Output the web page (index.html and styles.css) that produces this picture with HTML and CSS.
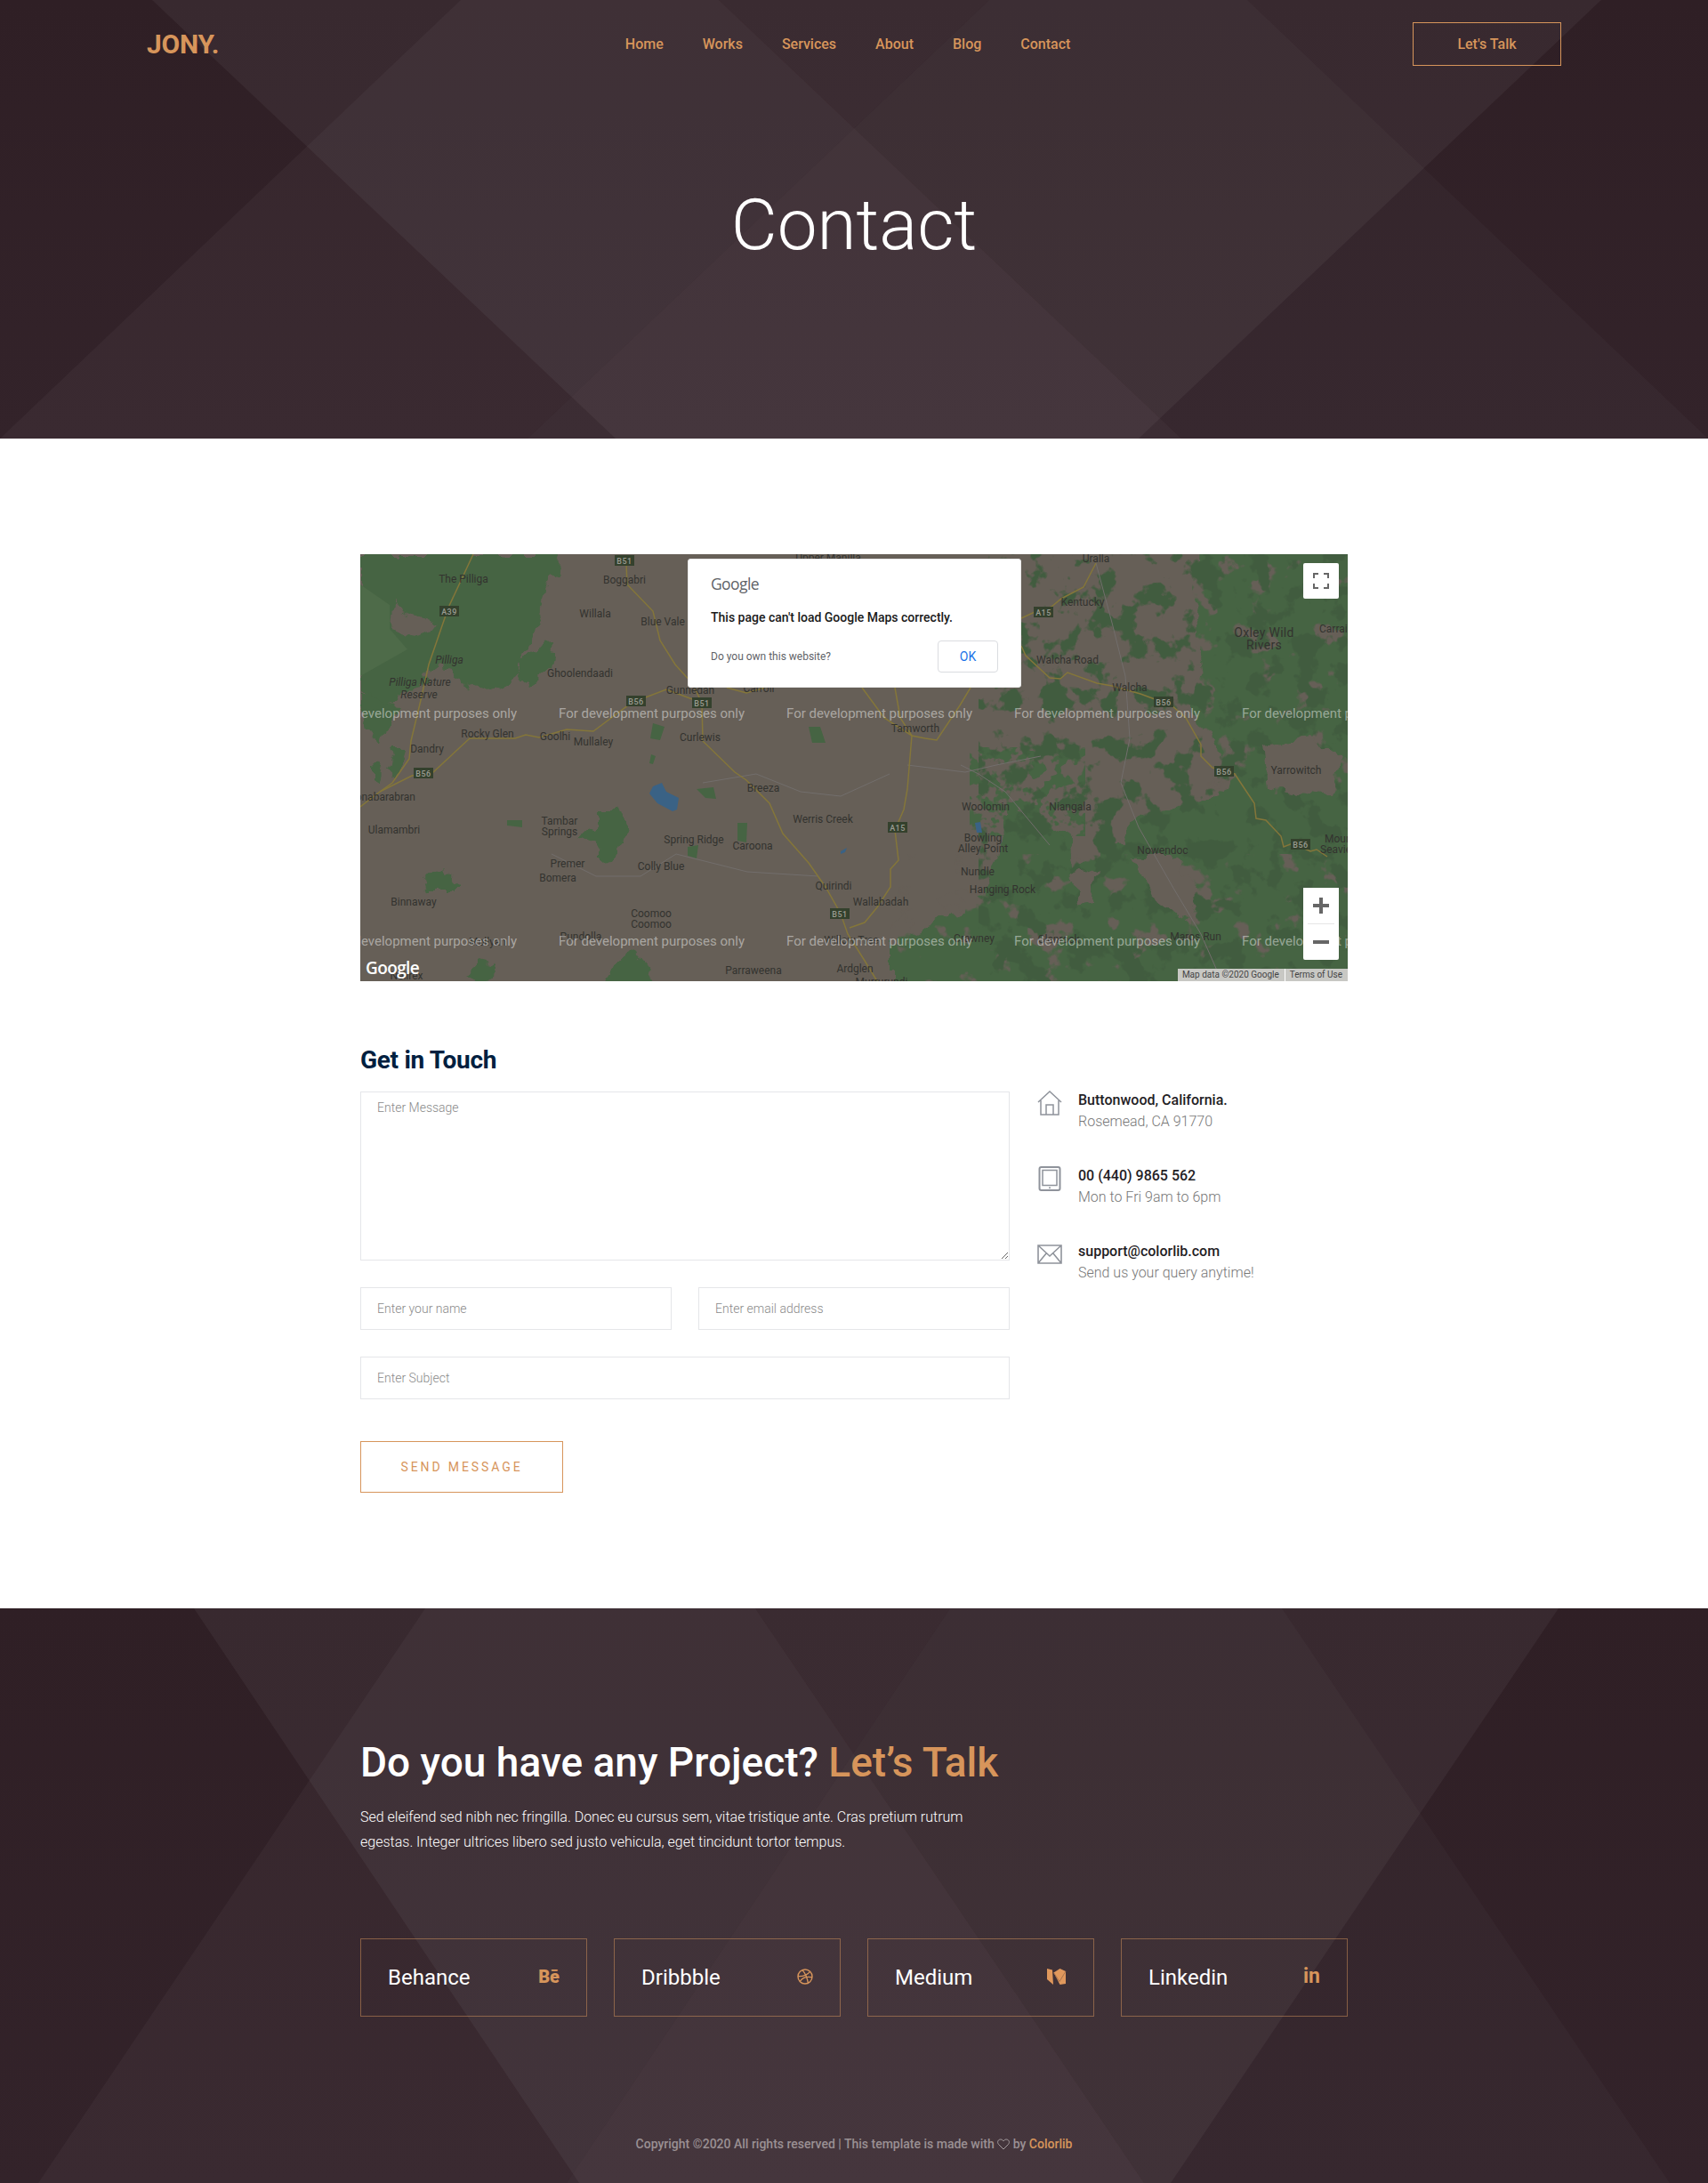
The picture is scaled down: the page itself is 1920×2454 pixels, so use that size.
FILE: index.html
```html
<!DOCTYPE html>
<html lang="en">
<head>
<meta charset="UTF-8">
<title>Contact</title>
<link rel="stylesheet" href="styles.css">
</head>
<body>

<section class="hero">
	<svg class="bands" viewBox="0 0 1920 493" preserveAspectRatio="none">
		<polygon class="d1" points="171,0 808,0 1328,493 692,493"/>
		<polygon class="d2" points="808,0 1402,0 1920,493 1328,493"/>
		<polygon class="u1" points="518,0 1112,0 593,493 0,493"/>
		<polygon class="u2" points="1112,0 1800,0 1280,493 593,493"/>
	</svg>
	<header class="topbar">
		<a class="logo" href="#">JONY.</a>
		<nav class="menu">
			<a href="#">Home</a>
			<a href="#">Works</a>
			<a href="#">Services</a>
			<a href="#">About</a>
			<a href="#">Blog</a>
			<a href="#">Contact</a>
		</nav>
		<a class="talk" href="#">Let's Talk</a>
	</header>
	<h1 class="hero-title">Contact</h1>
</section>

<section class="main">
	<div class="wrap">
		<div class="map">
			<svg class="map-art" viewBox="405 623 1110 480">
				<defs>
					<filter id="rough" x="-5%" y="-5%" width="110%" height="110%" color-interpolation-filters="sRGB">
						<feTurbulence type="fractalNoise" baseFrequency=".045" numOctaves="3" seed="4"/>
						<feDisplacementMap in="SourceGraphic" scale="24" xChannelSelector="R" yChannelSelector="G"/>
					</filter>
					<filter id="blotch-a" x="0" y="0" width="100%" height="100%" color-interpolation-filters="sRGB">
						<feTurbulence type="fractalNoise" baseFrequency=".03" numOctaves="4" seed="11"/>
						<feColorMatrix values="0 0 0 0 0 0 0 0 0 0 0 0 0 0 0 14 0 0 0 -8.400" result="mask"/>
						<feComposite in="SourceGraphic" in2="mask" operator="in"/>
					</filter>
					<filter id="blotch-b" x="0" y="0" width="100%" height="100%" color-interpolation-filters="sRGB">
						<feTurbulence type="fractalNoise" baseFrequency=".035" numOctaves="4" seed="23"/>
						<feColorMatrix values="0 0 0 0 0 0 0 0 0 0 0 0 0 0 0 0 14 0 0 -7.600" result="mask"/>
						<feComposite in="SourceGraphic" in2="mask" operator="in"/>
					</filter>
					<filter id="blotch-c" x="0" y="0" width="100%" height="100%" color-interpolation-filters="sRGB">
						<feTurbulence type="fractalNoise" baseFrequency=".07" numOctaves="3" seed="37"/>
						<feColorMatrix values="0 0 0 0 0 0 0 0 0 0 0 0 0 0 0 14 0 0 0 -7" result="mask"/>
						<feComposite in="SourceGraphic" in2="mask" operator="in"/>
					</filter>
				</defs>
				<!-- forests -->
				<g class="forest" filter="url(#rough)">
					<polygon points="405,623 628,623 624,645 612,672 606,690 598,720 592,735 584,757 560,772 545,778 520,768 505,755 487,752 482,745 478,760 470,772 450,786 428,790 405,778"/>
					<polygon points="405,780 440,790 450,800 437,815 432,840 415,817 405,800"/>
					<polygon points="444,840 458,840 448,873 434,860"/>
					<polygon points="417,860 431,862 427,880 417,873"/>
					<polygon points="584,750 608,723 623,722 618,752 594,768"/>
					<polygon points="671,910 696,910 705,933 691,967 676,968 676,950 654,940 671,930"/>
					<polygon points="480,993 497,975 521,1000 482,1000"/>
					<polygon points="521,1093 540,1082 560,1087 545,1100"/>
					<polygon points="681,1110 691,1080 713,1067 730,1087 744,1110"/>
					<polygon points="1347,610 1343,687 1353,753 1338,790 1367,837 1370,860 1383,870 1380,887 1333,907 1277,920 1263,937 1267,950 1233,953 1207,983 1200,937 1167,920 1135,905 1118,975 1110,997 1067,1033 1043,1040 1000,1063 1000,1115 1530,1115 1530,610"/>
				</g>
				<g class="forest">
					<polygon points="734,813 747,817 742,832 731,830"/>
					<polygon points="732,848 737,850 734,859 730,858"/>
					<polygon points="783,887 802,885 805,898 793,897"/>
					<polygon points="829,925 840,925 839,947 829,945"/>
					<polygon points="773,952 785,950 783,965 773,962"/>
					<polygon points="570,922 587,922 587,930 570,928"/>
					<polygon points="909,817 922,817 928,835 913,835"/>
				</g>
				<!-- scattered patches around the eastern forest -->
				<rect class="speck-green" x="1090" y="840" width="130" height="100" filter="url(#blotch-c)"/>
				<rect class="speck-land" x="1000" y="960" width="515" height="143" filter="url(#blotch-a)"/>
				<rect class="speck-land" x="1340" y="623" width="175" height="270" filter="url(#blotch-a)"/>
				<rect class="speck-dark" x="1100" y="623" width="415" height="480" filter="url(#blotch-b)"/>
				<g class="land" filter="url(#rough)">
					<polygon points="441,682 494,707 465,715 439,707"/>
					<polygon points="1420,835 1470,830 1505,850 1495,895 1460,890 1425,885"/>
					<polygon points="1275,965 1320,965 1350,1005 1340,1040 1300,1010"/>
					<polygon points="1207,985 1232,975 1228,1010 1212,1015"/>
				</g>
				<polygon class="pale" points="405,657 438,680 438,707 458,730 405,760"/>
				<!-- water -->
				<g class="water">
					<polygon points="730,892 734,884 744,880 749,890 763,897 761,910 756,912 739,903"/>
					<polygon points="1096,925 1102,924 1104,936 1098,936"/>
					<polygon points="945,957 952,953 950,958 945,960"/>
				</g>
				<!-- minor roads -->
				<g class="track">
					<polyline points="1232,633 1250,700 1265,760 1270,830 1260,880 1280,930 1320,1000 1350,1050 1372,1100"/>
					<polyline points="1080,860 1100,870 1130,890 1180,950"/>
					<polyline points="1020,860 1085,868 1120,860 1170,850"/>
					<polyline points="790,880 850,870 900,890 945,895 1000,870"/>
					<polyline points="620,960 670,985 720,985 760,960 840,980 920,985"/>
				</g>
				<!-- highways -->
				<g class="road">
					<polyline points="532,623 504,683 482,747 473,787 462,833 460,853 441,880 427,890 405,907"/>
					<polyline points="427,890 463,872 487,868 528,830 579,830 591,826 606,829 637,820 667,822 710,790 749,775 789,790"/>
					<polyline points="704,633 705,657 734,687 742,720 759,747 778,768 789,790 790,833 826,868 839,877 865,903 880,937 909,970 928,997 945,1027 953,1050 972,1080 986,1103"/>
					<polyline points="1025,827 1020,887 1016,910 1006,933 1010,967 1001,977 1001,997 986,1020 972,1037 955,1043"/>
					<polyline points="969,773 994,807 1025,827"/>
					<polyline points="1006,773 1012,807 1025,827 1040,830 1053,832 1079,793 1091,773"/>
					<polyline points="817,773 839,779 860,773"/>
					<polyline points="1232,633 1218,660 1193,673 1182,682 1163,688 1148,695"/>
					<polyline points="1148,726 1153,737 1180,762 1192,763 1200,756 1233,768 1250,771 1282,780 1317,793 1333,807 1350,837 1350,850 1363,863 1388,870 1410,903 1412,920 1423,922 1440,940 1443,952 1453,948 1473,957 1480,955 1492,963"/>
				</g>
				<!-- road shields -->
				<g class="shields">
					<rect x="691" y="624" width="22" height="12"/><text x="702" y="630.5">B51</text>
					<rect x="494" y="681" width="22" height="12"/><text x="505" y="687.5">A39</text>
					<rect x="704" y="782" width="22" height="12"/><text x="715" y="788.5">B56</text>
					<rect x="778" y="784" width="22" height="12"/><text x="789" y="790.5">B51</text>
					<rect x="465" y="863" width="22" height="12"/><text x="476" y="869.5">B56</text>
					<rect x="998" y="924" width="22" height="12"/><text x="1009" y="930.5">A15</text>
					<rect x="933" y="1021" width="22" height="12"/><text x="944" y="1027.5">B51</text>
					<rect x="1162" y="682" width="22" height="12"/><text x="1173" y="688.5">A15</text>
					<rect x="1297" y="783" width="22" height="12"/><text x="1308" y="789.5">B56</text>
					<rect x="1365" y="861" width="22" height="12"/><text x="1376" y="867.5">B56</text>
					<rect x="1451" y="943" width="22" height="12"/><text x="1462" y="949.5">B56</text>
				</g>
				<!-- place names -->
				<g class="places">
					<text x="521" y="651">The Pilliga</text>
					<text x="702" y="652">Boggabri</text>
					<text x="669" y="690">Willala</text>
					<text x="745" y="699">Blue Vale</text>
					<text class="park" x="505" y="742">Pilliga</text>
					<text class="park" x="472" y="767">Pilliga Nature</text>
					<text class="park" x="471" y="781">Reserve</text>
					<text x="652" y="757">Ghoolendaadi</text>
					<text x="776" y="776">Gunnedah</text>
					<text x="853" y="774">Carroll</text>
					<text x="931" y="627">Upper Manilla</text>
					<text x="548" y="825">Rocky Glen</text>
					<text x="624" y="828">Goolhi</text>
					<text x="667" y="834">Mullaley</text>
					<text x="787" y="829">Curlewis</text>
					<text x="1029" y="819">Tamworth</text>
					<text x="480" y="842">Dandry</text>
					<text class="end" x="467" y="896">Coonabarabran</text>
					<text x="443" y="933">Ulamambri</text>
					<text x="858" y="886">Breeza</text>
					<text x="629" y="923">Tambar</text>
					<text x="629" y="935">Springs</text>
					<text x="925" y="921">Werris Creek</text>
					<text x="780" y="944">Spring Ridge</text>
					<text x="846" y="951">Caroona</text>
					<text x="1108" y="907">Woolomin</text>
					<text x="1203" y="907">Niangala</text>
					<text x="1105" y="942">Bowling</text>
					<text x="1105" y="954">Alley Point</text>
					<text x="638" y="971">Premer</text>
					<text x="627" y="987">Bomera</text>
					<text x="743" y="974">Colly Blue</text>
					<text x="1099" y="980">Nundle</text>
					<text x="1127" y="1000">Hanging Rock</text>
					<text x="937" y="996">Quirindi</text>
					<text x="990" y="1014">Wallabadah</text>
					<text x="465" y="1014">Binnaway</text>
					<text x="732" y="1027">Coomoo</text>
					<text x="732" y="1039">Coomoo</text>
					<text x="653" y="1053">Pundolla</text>
					<text x="548" y="1059">Mollyan</text>
					<text x="957" y="1057">Willow Tree</text>
					<text x="1095" y="1055">Crawney</text>
					<text x="1190" y="1056">Glenrock</text>
					<text x="1344" y="1053">Maros Run</text>
					<text x="847" y="1091">Parraweena</text>
					<text x="961" y="1089">Ardglen</text>
					<text x="991" y="1104">Murrurundi</text>
					<text x="457" y="1097">Neilrex</text>
					<text x="1232" y="628">Uralla</text>
					<text x="1217" y="677">Kentucky</text>
					<text class="big" x="1421" y="711">Oxley Wild</text>
					<text class="big" x="1421" y="725">Rivers</text>
					<text class="start" x="1483" y="707">Carrai</text>
					<text x="1200" y="742">Walcha Road</text>
					<text x="1270" y="773">Walcha</text>
					<text x="1457" y="866">Yarrowitch</text>
					<text x="1307" y="956">Nowendoc</text>
					<text class="start" x="1489" y="943">Mount</text>
					<text class="start" x="1484" y="955">Seaview</text>
				</g>
				<!-- dev watermark, one per map tile -->
				<g class="watermark">
					<text x="372" y="802">For development purposes only</text>
					<text x="628" y="802">For development purposes only</text>
					<text x="884" y="802">For development purposes only</text>
					<text x="1140" y="802">For development purposes only</text>
					<text x="1396" y="802">For development purposes only</text>
					<text x="372" y="1058">For development purposes only</text>
					<text x="628" y="1058">For development purposes only</text>
					<text x="884" y="1058">For development purposes only</text>
					<text x="1140" y="1058">For development purposes only</text>
					<text x="1396" y="1058">For development purposes only</text>
				</g>
				<text class="map-brand" x="411" y="1095">Google</text>
			</svg>

			<div class="map-alert">
				<div class="alert-brand">Google</div>
				<div class="alert-msg">This page can't load Google Maps correctly.</div>
				<div class="alert-foot">
					<span>Do you own this website?</span>
					<button class="alert-ok" type="button">OK</button>
				</div>
			</div>

			<button class="map-btn map-full" type="button" aria-label="Toggle fullscreen">
				<svg width="18" height="18" viewBox="0 0 18 18"><path d="M1 6V1h5M12 1h5v5M17 12v5h-5M6 17H1v-5" fill="none" stroke="#666" stroke-width="2"/></svg>
			</button>
			<div class="map-zoom">
				<button type="button" aria-label="Zoom in"><svg width="18" height="18" viewBox="0 0 18 18"><path d="M7 0h4v7h7v4h-7v7H7v-7H0V7h7z" fill="#666"/></svg></button>
				<button type="button" aria-label="Zoom out"><svg width="18" height="18" viewBox="0 0 18 18"><path d="M0 7h18v4H0z" fill="#666"/></svg></button>
			</div>
			<div class="map-credit"><span>Map data ©2020 Google</span><span>Terms of Use</span></div>
		</div>

		<h2 class="touch-title">Get in Touch</h2>
		<div class="contact">
			<form class="contact-form" action="">
				<textarea placeholder="Enter Message"></textarea>
				<div class="two">
					<input type="text" placeholder="Enter your name">
					<input type="text" placeholder="Enter email address">
				</div>
				<input type="text" placeholder="Enter Subject">
				<button class="send" type="button">Send Message</button>
			</form>
			<div class="info">
				<div class="info-row">
					<svg class="info-icon" viewBox="0 0 28 28"><path d="M1 13 14 1l13 12M4 11v16h20V11M10 27V16h8v11" fill="none" stroke="#8f939b" stroke-width="1.5"/></svg>
					<div><h3>Buttonwood, California.</h3><p>Rosemead, CA 91770</p></div>
				</div>
				<div class="info-row">
					<svg class="info-icon" viewBox="0 0 28 28"><rect x="2.500" y="1" width="23" height="26" rx="2" fill="none" stroke="#8f939b" stroke-width="2"/><rect x="6" y="4.500" width="16" height="17" fill="none" stroke="#8f939b" stroke-width="1.500"/><circle cx="14" cy="24.300" r="1" fill="#8f939b"/></svg>
					<div><h3>00 (440) 9865 562</h3><p>Mon to Fri 9am to 6pm</p></div>
				</div>
				<div class="info-row">
					<svg class="info-icon" viewBox="0 0 28 28"><path d="M1 4h26v20H1zM1 4l13 12L27 4M1 24l9.500-11.500M27 24 17.500 12.500" fill="none" stroke="#8f939b" stroke-width="1.600"/></svg>
					<div><h3>support@colorlib.com</h3><p>Send us your query anytime!</p></div>
				</div>
			</div>
		</div>
	</div>
</section>

<footer class="footer">
	<svg class="bands" viewBox="0 0 1920 646" preserveAspectRatio="none">
		<polygon class="d1" points="218,0 849,0 1286,646 651,646"/>
		<polygon class="d2" points="849,0 1441,0 1877,646 1286,646"/>
		<polygon class="u1" points="478,0 1068,0 637,646 43,646"/>
		<polygon class="u2" points="1068,0 1752,0 1316,646 637,646"/>
	</svg>
	<div class="wrap footer-in">
		<h2 class="project">Do you have any Project? <span>Let’s Talk</span></h2>
		<p class="project-text">Sed eleifend sed nibh nec fringilla. Donec eu cursus sem, vitae tristique ante. Cras pretium rutrum<br>egestas. Integer ultrices libero sed justo vehicula, eget tincidunt tortor tempus.</p>
		<div class="socials">
			<a class="social" href="#">Behance<b class="be">Bē</b></a>
			<a class="social" href="#">Dribbble
				<svg class="social-icon" width="18" height="18" viewBox="0 0 18 18" fill="none" stroke="#d7955b" stroke-width="1.400"><circle cx="9" cy="9" r="8"/><path d="M6 1.600c3 3.400 5.500 9.400 6.400 14.600M1 8.600c5 .4 10-1 13.400-5M3.200 14.500c2.500-4 7.300-6 13.800-4.700"/></svg>
			</a>
			<a class="social" href="#">Medium
				<svg class="social-icon" width="22" height="19" viewBox="0 0 22 19"><path d="M0 1l6 1.500L7 19l-7-6z" fill="#e0985c"/><path d="M7.500 5.500 14.500 1 21 4v14l-6.500 1z" fill="#e0985c"/><path d="M7.500 5.500 14 15.500 21 4" fill="none" stroke="#a8744f"/></svg>
			</a>
			<a class="social" href="#">Linkedin<b class="in">in</b></a>
		</div>
		<p class="copy">Copyright ©2020 All rights reserved | This template is made with <svg width="14" height="13" viewBox="0 0 14 13"><path d="M7 12 1.500 6.500C-.5 4 1 1 3.800 1 5.300 1 6.400 1.800 7 3c.6-1.200 1.700-2 3.200-2C13 1 14.500 4 12.500 6.500z" fill="none" stroke="#a59c9f"/></svg> by <a href="#">Colorlib</a></p>
	</div>
</footer>

</body>
</html>
```

FILE: styles.css
```css
*{
	box-sizing: border-box;
}
body{
	margin: 0;
	font: 16px/1.5 Roboto, "Liberation Sans", sans-serif;
	color: #222;
	background: #fff;
}
a{
	text-decoration: none;
	color: inherit;
}
.wrap{
	width: 1110px;
	margin: 0 auto;
}

/* background bands shared by hero and footer */
.bands{
	position: absolute;
	left: 0;
	top: 0;
	width: 100%;
	height: 100%;
}
.bands polygon{
	fill: #fff;
}
.bands .d1{ fill-opacity: .048; }
.bands .d2{ fill-opacity: .022; }
.bands .u1{ fill-opacity: .037; }
.bands .u2{ fill-opacity: .047; }

/* hero */
.hero{
	position: relative;
	height: 493px;
	background: linear-gradient(#2f1f25, #33232a);
	overflow: hidden;
}
.topbar{
	position: relative;
	display: flex;
	align-items: center;
	justify-content: space-between;
	margin: 25px 165px 0;
	height: 49px;
}
.logo{
	font-size: 30px;
	font-weight: 700;
	letter-spacing: -.2px;
	color: #d7955b;
	line-height: 1;
}
.menu{
	display: flex;
	gap: 44px;
	margin-left: 72px;
}
.menu a{
	font-size: 16px;
	font-weight: 500;
	color: #d7955b;
}
.talk{
	width: 167px;
	height: 49px;
	line-height: 47px;
	text-align: center;
	border: 1px solid #d7955b;
	font-size: 16px;
	font-weight: 500;
	color: #d7955b;
}
.hero-title{
	position: relative;
	margin: 139px 0 0;
	text-align: center;
	font-size: 80px;
	font-weight: 300;
	line-height: 80px;
	color: #fff;
}

/* map */
.main{
	padding: 130px 0;
}
.map{
	position: relative;
	height: 480px;
	overflow: hidden;
	background: #665f57;
}
.map-art{
	display: block;
	width: 1110px;
	height: 480px;
}
.forest polygon{ fill: #466443; }
.pale{ fill: #4e6b49; }
.land polygon{ fill: #665f57; }
.speck-green{ fill: #466443; }
.speck-land{ fill: #665f57; }
.speck-dark{ fill: #415c3f; }
.water polygon{ fill: #3a6285; }
.track polyline{
	fill: none;
	stroke: #726e6c;
	stroke-width: 1;
}
.road polyline{
	fill: none;
	stroke: #84763a;
	stroke-width: 1.500;
}
.shields rect{
	fill: #34412d;
}
.shields text{
	font: 500 9px Roboto, sans-serif;
	fill: #9a9c92;
	text-anchor: middle;
	dominant-baseline: central;
	letter-spacing: .5px;
}
.places text{
	font: 12px Roboto, sans-serif;
	fill: #33332f;
	text-anchor: middle;
	dominant-baseline: central;
}
.places .park{
	font-style: italic;
}
.places .big{
	font-size: 14px;
	letter-spacing: .3px;
}
.places .start{ text-anchor: start; }
.places .end{ text-anchor: end; }
.watermark text{
	font: 15px Roboto, sans-serif;
	fill: #fff;
	fill-opacity: .45;
	dominant-baseline: central;
}
.map-brand{
	font: 600 19px "Open Sans", sans-serif;
	fill: #fff;
	letter-spacing: -.6px;
}
.map-alert{
	position: absolute;
	left: 368px;
	top: 5px;
	width: 375px;
	height: 145px;
	padding: 15px 25px 0;
	background: #fff;
	border-radius: 3px;
	border: 1px solid #e8e8e8;
}
.alert-brand{
	font: 17.500px/24px "Open Sans", sans-serif;
	color: #5f6368;
	letter-spacing: -.6px;
}
.alert-msg{
	margin-top: 16px;
	font-size: 14px;
	font-weight: 500;
	line-height: 20px;
	color: #1a1a1a;
}
.alert-foot{
	display: flex;
	align-items: center;
	justify-content: space-between;
	margin-top: 16px;
	font-size: 12px;
	color: #5f6368;
}
.alert-ok{
	width: 68px;
	height: 36px;
	padding: 0;
	background: #fff;
	border: 1px solid #dadce0;
	border-radius: 4px;
	font: 14px Roboto, sans-serif;
	color: #1a73e8;
}
.map-btn,
.map-zoom button{
	display: flex;
	align-items: center;
	justify-content: center;
	padding: 0;
	background: #fff;
	border: 0;
}
.map-full{
	position: absolute;
	left: 1060px;
	top: 10px;
	width: 40px;
	height: 40px;
	border-radius: 2px;
}
.map-zoom{
	position: absolute;
	left: 1060px;
	top: 375px;
	width: 40px;
	height: 81px;
	background: #fff;
	border-radius: 2px;
}
.map-zoom button{
	width: 40px;
	height: 40px;
}
.map-zoom button + button{
	height: 41px;
	border-top: 1px solid #e6e6e6;
	width: 30px;
	margin: 0 5px;
}
.map-credit{
	position: absolute;
	right: 0;
	bottom: 0;
	display: flex;
	height: 14px;
	font-size: 10px;
	line-height: 14px;
	color: #444;
	background: #c8c8c4;
}
.map-credit span{
	padding: 0 6px 0 5px;
}
.map-credit span + span{
	border-left: 1px solid #fff;
}

/* contact */
.touch-title{
	margin: 72px 0 18px;
	font-size: 28px;
	font-weight: 700;
	line-height: 34px;
	letter-spacing: -.3px;
	color: #00203f;
}
.contact{
	display: grid;
	grid-template-columns: 730px 1fr;
	column-gap: 31px;
}
.contact-form{
	display: flex;
	flex-direction: column;
}
.contact-form textarea,
.contact-form input{
	display: block;
	width: 100%;
	height: 48px;
	padding: 0 18px;
	border: 1px solid #e5e6e9;
	border-radius: 0;
	font: 300 14px Roboto, sans-serif;
	color: #333;
	background: #fff;
}
.contact-form textarea{
	height: 190px;
	padding-top: 9px;
	margin-bottom: 30px;
}
.contact-form ::placeholder{
	color: #8a8a8a;
	opacity: 1;
}
.two{
	display: grid;
	grid-template-columns: 350px 350px;
	column-gap: 30px;
	margin-bottom: 30px;
}
.send{
	width: 228px;
	height: 58px;
	margin-top: 47px;
	padding: 0;
	background: #fff;
	border: 1px solid #d7955b;
	font: 400 14px Roboto, sans-serif;
	letter-spacing: 2.900px;
	text-transform: uppercase;
	color: #d7955b;
}
.info{
	margin-top: -2px;
}
.info-row{
	display: flex;
	gap: 18px;
	margin-bottom: 38px;
}
.info-icon{
	flex: none;
	width: 28px;
	height: 28px;
	margin-top: 1px;
}
.info-row h3{
	margin: 0;
	font-size: 16px;
	font-weight: 500;
	line-height: 24px;
	color: #1f2125;
}
.info-row p{
	margin: 0;
	font-size: 16px;
	font-weight: 300;
	line-height: 23px;
	color: #777;
}

/* footer */
.footer{
	position: relative;
	height: 646px;
	background: linear-gradient(#2f1f25, #33232a);
	overflow: hidden;
}
.footer-in{
	position: relative;
	padding-top: 146px;
}
.project{
	margin: 0;
	font-size: 46px;
	font-weight: 500;
	line-height: 54px;
	color: #fff;
}
.project span{
	color: #d7955b;
}
.project-text{
	margin: 21px 0 0;
	font-size: 16px;
	font-weight: 300;
	line-height: 28px;
	color: #fff;
}
.socials{
	display: grid;
	grid-template-columns: repeat(4, 255px);
	column-gap: 30px;
	margin-top: 94px;
}
.social{
	display: flex;
	align-items: center;
	justify-content: space-between;
	height: 88px;
	padding: 0 30px;
	border: 1px solid rgba(215,149,91,.5);
	font-size: 24px;
	color: #fff;
}
.social b{
	font-weight: 900;
	color: #d7955b;
	margin-top: -2px;
}
.social .be{
	font-size: 20px;
}
.social .in{
	font-size: 23px;
	font-weight: 700;
}
.social-icon{
	flex: none;
	margin-top: -3px;
}
.copy{
	margin: 133px 0 0;
	text-align: center;
	font-size: 14px;
	font-weight: 500;
	line-height: 20px;
	color: #9a9093;
}
.copy svg{
	vertical-align: -2px;
}
.copy a{
	color: #d7955b;
}
```
